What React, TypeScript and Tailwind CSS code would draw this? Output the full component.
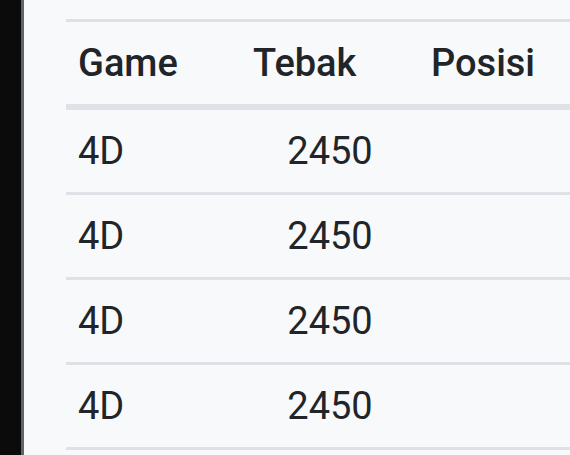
const rows = [
  { game: "4D", tebak: "2450", posisi: "" },
  { game: "4D", tebak: "2450", posisi: "" },
  { game: "4D", tebak: "2450", posisi: "" },
  { game: "4D", tebak: "2450", posisi: "" },
];

const cols = "grid grid-cols-[175px_178px_178px_1fr]";

export default function App() {
  return (
    <div className="flex h-[455px] w-[570px] overflow-hidden bg-[#f8f9fa] font-['Roboto',sans-serif] text-[#212529]">
      {/* side rail */}
      <div className="w-[21px] shrink-0 bg-[#0b0b0b]" />
      <div className="w-[3px] shrink-0 bg-[#5f656b]" />

      <div className="flex-1 overflow-hidden pl-[42px] pt-[19px]">
        <div className="w-[720px] text-[38px] leading-none">
          {/* header */}
          <div className={`${cols} h-[91px] items-center border-t-[3px] border-b-[6px] border-[#dee2e6] font-medium`}>
            <div className="px-3">Game</div>
            <div className="px-3">Tebak</div>
            <div className="px-3">Posisi</div>
            <div className="px-3" />
          </div>
          {/* body */}
          {rows.map((r, i) => (
            <div key={i} className={`${cols} h-[85px] items-center border-b-[3px] border-[#dee2e6]`}>
              <div className="px-3">{r.game}</div>
              <div className="px-3 text-center">{r.tebak}</div>
              <div className="px-3">{r.posisi}</div>
              <div className="px-3" />
            </div>
          ))}
        </div>
      </div>
    </div>
  );
}
